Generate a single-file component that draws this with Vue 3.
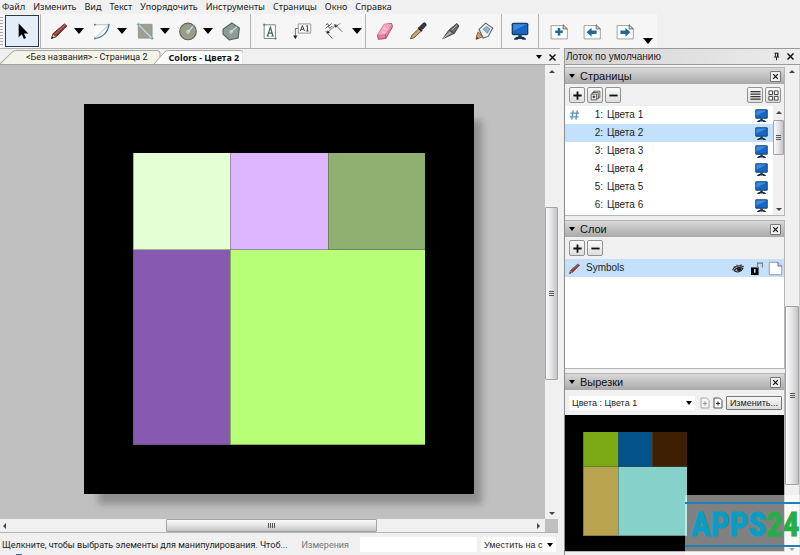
<script setup>
import { ref } from 'vue'

const menu = ['Файл', 'Изменить', 'Вид', 'Текст', 'Упорядочить', 'Инструменты', 'Страницы', 'Окно', 'Справка']

const monitor =
  '<rect x="2" y="2" width="20" height="15" rx="2" fill="#123d66"/><rect x="3.5" y="3.5" width="17" height="12" fill="#1768c4"/><path d="M4 4h16L4 12z" fill="#3c8be0"/><path d="M10 17h4v3h-4z" fill="#16324e"/><path d="M5 21l3-2h8l3 2v1.500h-4l-1-1h-4l-1 1H5z" fill="#16324e"/>'
const sheet =
  '<path d="M2.500 5.500h14.500l5 4v12h-19.500z" fill="#fdfdfd" stroke="#8d9296"/><path d="M17 4.500v5h5z" fill="#d8d8d8" stroke="#555"/>'

const icons = {
  cursor: '<path d="M8 3v16.500l3.800-3.500 2.500 5.500 2.400-1-2.300-5.500h5.200z" fill="#000"/>',
  pencil:
    '<path d="M3 21l2-6L18.500 3.500l3 2.500L9 18.500z" fill="#8e3a38" stroke="#542725"/><path d="M7 16L19.500 4.500" stroke="#c37670" stroke-width="1.200"/><path d="M3 21l1.700-5.300L8.500 19z" fill="#e0c49c" stroke="#5b4433" stroke-width=".8"/><path d="M3 21l.8-2.500 1.800 1.600z" fill="#111"/>',
  arc:
    '<path d="M4 4.500h16.500C19.500 13 13 20 4 21z" fill="#fff" opacity=".8"/><path d="M3 4.500h17.500L4 20.500" fill="none" stroke="#9bb3c1"/><path d="M20.500 3.500C19.500 13 13 20 3.500 21" fill="none" stroke="#3c7793" stroke-width="1.500"/><circle cx="3.500" cy="4.500" r="1.200" fill="#4489a8"/><circle cx="3.500" cy="21" r="1.200" fill="#4489a8"/>',
  rect:
    '<path d="M4 4h16.500v16.500H4z" fill="#9c9f91" stroke="#8c9089"/><path d="M4 4l16.500 17" stroke="#b9dcea" stroke-width="1.500"/><path d="M2 4h4M4 2v4M18.500 21h4M20.500 19v4" stroke="#6ea4bc"/>',
  circle:
    '<circle cx="12" cy="12.500" r="10" fill="#9b9d88" stroke="#57645f" stroke-width="1.300"/><path d="M12 13l6-6.500" stroke="#c5edf4" stroke-width="1.500"/><circle cx="12" cy="13" r="1.700" fill="none" stroke="#d3eef2"/><circle cx="18.500" cy="6" r="1.300" fill="#6ea4bc"/>',
  polygon:
    '<path d="M2.500 10l10.500-7.500 9 6-1.500 12-10.500 2-7.500-6.500z" fill="#929b93" stroke="#4d696f" stroke-width="1.500"/><path d="M12 13l7-6" stroke="#c5edf4" stroke-width="1.400"/><circle cx="12" cy="13" r="1.600" fill="none" stroke="#d3eef2"/>',
  text:
    '<path d="M5 4.500h13.500v16.500H5z" fill="#fbfdfc" stroke="#63766d"/><path d="M8 18h3M13.500 18h3M9 18l3.500-10.500L15.500 18M10 14.500h4.500" fill="none" stroke="#41645a" stroke-width="1.400"/><path d="M3.500 4.500h3M5 3v3M17 21h3M18.500 19.500v3" stroke="#63766d"/>',
  label:
    '<path d="M7.500 3.500h15v11h-15z" fill="#fafafa" stroke="#888"/><path d="M10 12l2.500-6.500L15 12M11 10h3M17 6.500l1.500-1V12M17 12h3" fill="none" stroke="#333" stroke-width="1.100"/><path d="M7 9H4v10" fill="none" stroke="#555"/><path d="M1.500 17.500h5L4 22z" fill="#222"/>',
  dimension:
    '<path d="M2 5l2-2 2 3 3-3M2 9l3-3 2 3 3-3M2 12l8 9" fill="none" stroke="#555" stroke-width="1.200"/><path d="M4 14L14 5l8 8" fill="none" stroke="#777" stroke-width="1.200"/><path d="M3 15l1.500-4 2.500 3zM12 4l5 1-3 3z" fill="#222"/><path d="M14 6l6-3" stroke="#888"/>',
  eraser:
    '<path d="M3 17L11 4l9-1 1 4-8 14-9 1z" fill="#e87f9c" stroke="#8a4357"/><path d="M3.500 16.500L11 4l9-.5-7.500 12z" fill="#f4a9bd"/><path d="M8 13l5 1M10 9l6 1" stroke="#fbd8e0"/><path d="M12.500 15.500L13 21" stroke="#a1536a"/>',
  dropper:
    '<path d="M3 21.500l1.500-4L13 9l3 3-8.500 8z" fill="#c6a06b" stroke="#5d4c39"/><path d="M11.500 8.500l2-1.500 4 4-1.500 2z" fill="#222"/><path d="M14 7l4.500-4.500c2-1 4 1 3 3L17.500 10z" fill="#343a42" stroke="#16191d"/>',
  knife:
    '<path d="M2 21.500L9.500 11l6 4z" fill="#85898c" stroke="#333"/><path d="M2 21.500l10-8.500" stroke="#ddd"/><path d="M10 10.500l9-7.500 2.500 3-5.500 9z" fill="#666b6f" stroke="#303336"/><path d="M13 11l6-6" stroke="#bbb"/>',
  glue:
    '<path d="M6 10l8-7.500 8.500 6-5.500 10-6 2z" fill="#eaf2f5" stroke="#58646a" stroke-width="1.300"/><path d="M11 10l4-3.500 4 3-3 5z" fill="#92b6cb" stroke="#60839a"/><path d="M5 13l5.500 6-4 1.500-4 1.500.5-4z" fill="#d49d62" stroke="#775334"/><path d="M2.500 22l1-3 2 2z" fill="#333"/>',
  monitor,
  add: sheet + '<path d="M10.500 8.500h3v3h3v3h-3v3h-3v-3h-3v-3h3z" fill="#20699c"/>',
  prev: sheet + '<path d="M5.500 13.500l6-5.500v3.500h6v4h-6v3.500z" fill="#20699c"/>',
  next: sheet + '<path d="M18.500 13.500L12.500 8v3.500h-6v4h6v3.500z" fill="#20699c"/>',
  plus: '<path d="M10 3h4v7h7v4h-7v7h-4v-7H3v-4h7z" fill="#111"/>',
  minus: '<path d="M3 10h18v4H3z" fill="#111"/>',
  duplicate:
    '<path d="M8 6V2.500h13.500V16H18" fill="none" stroke="#333" stroke-width="1.600"/><path d="M5 9V5.500h13V19h-3" fill="none" stroke="#333" stroke-width="1.600"/><path d="M2.500 9h12v12.500h-12z" fill="#eee" stroke="#333" stroke-width="1.600"/><path d="M8.500 12v6M5.500 15h6" stroke="#111" stroke-width="2"/>',
  list: '<path d="M1 3.500h22M1 9h22M1 14.500h22M1 20h22" stroke="#333" stroke-width="2.400"/>',
  grid: '<path d="M2 2h8v8H2zM14 2h8v8h-8zM2 14h8v8H2zM14 14h8v8h-8z" fill="#fff" stroke="#333" stroke-width="2"/>',
  close: '<path d="M4 4l16 16M20 4L4 20" stroke="#111" stroke-width="4"/>',
  pin: '<path d="M7 3h10M9 3v10M14.500 3v10M16 3v10M5 13.500h14M12 14v8" fill="none" stroke="#111" stroke-width="2.500"/>',
  hash: '<path d="M9 2L6 22M18 2l-3 20M3 8h19M2 16h19" stroke="#5f93b8" stroke-width="3"/>',
  eye: '<path d="M1 15C4 7 14 5 22 9M4 16c4-6 12-7 16-4-3 7-12 8-16 4z" fill="#b5b5b5" stroke="#222" stroke-width="2"/><circle cx="13" cy="13" r="4" fill="#222"/><path d="M4 8l2 3M9 5l1 3M17 4l-1 4" stroke="#222" stroke-width="1.500"/>',
  lock: '<path d="M0 10h14v14H0z" fill="#050505"/><path d="M12 11V2h9v8" fill="none" stroke="#777" stroke-width="2"/><path d="M7 13v7" stroke="#fff" stroke-width="2.400"/>',
  page: '<path d="M2 2h14l6 6v14H2z" fill="#fff" stroke="#99a" stroke-width="1.600"/><path d="M16 2v6h6" fill="#ddd" stroke="#667" stroke-width="1.600"/>',
  newpage:
    '<path d="M4 2h11l5 5v15H4z" fill="#fafafa" stroke="#555" stroke-width="2"/><path d="M12 9v8M8 13h8" stroke="#333" stroke-width="2.400"/>'
}

const groups = [
  [
    { icon: 'pencil', label: 'Линия', caret: true },
    { icon: 'arc', label: 'Дуга', caret: true },
    { icon: 'rect', label: 'Прямоугольник', caret: true },
    { icon: 'circle', label: 'Окружность', caret: true },
    { icon: 'polygon', label: 'Многоугольник' }
  ],
  [
    { icon: 'text', label: 'Текст' },
    { icon: 'label', label: 'Метка' },
    { icon: 'dimension', label: 'Размеры', caret: true }
  ],
  [
    { icon: 'eraser', label: 'Ластик' },
    { icon: 'dropper', label: 'Стиль' },
    { icon: 'knife', label: 'Разделить' },
    { icon: 'glue', label: 'Соединить' }
  ],
  [{ icon: 'monitor', label: 'Презентация' }],
  [
    { icon: 'add', label: 'Добавить страницу' },
    { icon: 'prev', label: 'Назад' },
    { icon: 'next', label: 'Вперёд' }
  ]
]

const pages = ['Цвета 1', 'Цвета 2', 'Цвета 3', 'Цвета 4', 'Цвета 5', 'Цвета 6']
const selected = ref(1)
</script>

<template>
  <div class="window">
    <nav class="menu">
      <a v-for="m in menu" :key="m" href="#">{{ m }}</a>
    </nav>

    <div class="toolbar">
      <div class="tools">
        <i class="grip"></i>
        <button class="tool picked" aria-label="Выбор"><svg viewBox="0 0 24 24" v-html="icons.cursor"></svg></button>
        <div v-for="(g, i) in groups" :key="i" class="group" :class="'group-' + i">
          <template v-for="t in g" :key="t.icon">
            <button class="tool" :aria-label="t.label"><svg viewBox="0 0 24 24" v-html="icons[t.icon]"></svg></button>
            <button v-if="t.caret" class="drop" :aria-label="t.label + ': варианты'"><i class="caret"></i></button>
          </template>
        </div>
        <button class="more" aria-label="Ещё"><i class="caret"></i></button>
      </div>
    </div>

    <div class="main">
      <section class="work">
        <div class="tabs">
          <button class="tab">
            <svg viewBox="0 0 158 14" preserveAspectRatio="none"><path d="M0 14L11 3Q13 .5 16 .5H154Q157.500 .5 157.500 4V14" /></svg>
            <span>&lt;Без названия&gt; - Страница 2</span>
          </button>
          <button class="tab active">
            <svg viewBox="0 0 92 14" preserveAspectRatio="none"><path d="M0 14L10 3Q12 .5 15 .5H89Q91.500 .5 91.500 3V14" /></svg>
            <span>Colors - Цвета 2</span>
          </button>
          <div class="tab-actions">
            <button class="bare" aria-label="Список вкладок"><i class="caret small"></i></button>
            <button class="bare" aria-label="Закрыть"><svg class="s9" viewBox="0 0 24 24" v-html="icons.close"></svg></button>
          </div>
        </div>

        <div class="view">
          <div class="canvas">
            <div class="paper">
              <div class="swatches">
                <i class="mint"></i><i class="lilac"></i><i class="olive"></i><i class="violet"></i><i class="lime"></i>
              </div>
            </div>
          </div>
          <div class="scroll vertical">
            <i class="arrow up"></i>
            <div class="track"><i class="thumb"><b></b></i></div>
            <i class="arrow down"></i>
          </div>
        </div>
        <div class="bottom-scroll">
          <div class="scroll horizontal">
            <i class="arrow left"></i>
            <div class="track"><i class="thumb"><b></b></i></div>
            <i class="arrow right"></i>
          </div>
          <i class="corner"></i>
        </div>

        <footer class="status">
          <span class="hint">Щелкните, чтобы выбрать элементы для манипулирования. Чтоб...</span>
          <label for="measure">Измерения</label>
          <input id="measure" type="text" />
          <div class="select zoom">
            <select aria-label="Масштаб"><option>Уместить на с</option></select>
            <i class="caret small"></i>
          </div>
        </footer>
        <div class="info"><i></i></div>
      </section>

      <aside class="tray">
        <header class="tray-title">
          <h2>Лоток по умолчанию</h2>
          <button class="bare" aria-label="Закрепить"><svg class="s9" viewBox="0 0 24 24" v-html="icons.pin"></svg></button>
          <button class="bare" aria-label="Закрыть лоток"><svg class="s9" viewBox="0 0 24 24" v-html="icons.close"></svg></button>
        </header>
        <div class="tray-body">
          <div class="panels">
            <section class="panel">
              <header class="panel-title">
                <i class="caret small"></i>
                <h3>Страницы</h3>
                <button class="x" aria-label="Закрыть"><svg viewBox="0 0 24 24" v-html="icons.close"></svg></button>
              </header>
              <div class="panel-tools">
                <button class="sq" aria-label="Добавить"><svg viewBox="0 0 24 24" v-html="icons.plus"></svg></button>
                <button class="sq" aria-label="Дублировать"><svg viewBox="0 0 24 24" v-html="icons.duplicate"></svg></button>
                <button class="sq" aria-label="Удалить"><svg viewBox="0 0 24 24" v-html="icons.minus"></svg></button>
                <i class="fill"></i>
                <button class="sq" aria-label="Список"><svg viewBox="0 0 24 24" v-html="icons.list"></svg></button>
                <button class="sq" aria-label="Сетка"><svg viewBox="0 0 24 24" v-html="icons.grid"></svg></button>
              </div>
              <div class="list">
                <ul>
                  <li v-for="(p, i) in pages" :key="p" :class="{ on: selected === i }" @click="selected = i">
                    <span class="mark"><svg v-if="i === 0" viewBox="0 0 24 24" v-html="icons.hash"></svg></span>
                    <span class="num">{{ i + 1 }}:</span>
                    <span class="name">{{ p }}</span>
                    <svg class="screen" viewBox="0 0 24 24" v-html="icons.monitor"></svg>
                  </li>
                </ul>
                <div class="scroll vertical narrow">
                  <i class="arrow up"></i>
                  <div class="track start"><i class="thumb"><b></b></i></div>
                  <i class="arrow down"></i>
                </div>
              </div>
            </section>

            <section class="panel">
              <header class="panel-title">
                <i class="caret small"></i>
                <h3>Слои</h3>
                <button class="x" aria-label="Закрыть"><svg viewBox="0 0 24 24" v-html="icons.close"></svg></button>
              </header>
              <div class="panel-tools">
                <button class="sq" aria-label="Добавить слой"><svg viewBox="0 0 24 24" v-html="icons.plus"></svg></button>
                <button class="sq" aria-label="Удалить слой"><svg viewBox="0 0 24 24" v-html="icons.minus"></svg></button>
              </div>
              <div class="list">
                <ul>
                  <li class="on layer">
                    <svg viewBox="0 0 24 24" v-html="icons.pencil"></svg>
                    <span class="name">Symbols</span>
                    <svg viewBox="0 0 24 24" v-html="icons.eye"></svg>
                    <svg viewBox="0 0 24 24" v-html="icons.lock"></svg>
                    <svg class="big" viewBox="0 0 24 24" v-html="icons.page"></svg>
                  </li>
                </ul>
              </div>
            </section>

            <section class="panel">
              <header class="panel-title">
                <i class="caret small"></i>
                <h3>Вырезки</h3>
                <button class="x" aria-label="Закрыть"><svg viewBox="0 0 24 24" v-html="icons.close"></svg></button>
              </header>
              <div class="panel-tools scrap">
                <div class="select">
                  <select aria-label="Вырезки"><option>Цвета : Цвета 1</option></select>
                  <i class="caret small"></i>
                </div>
                <button class="bare dim" aria-label="Добавить вырезку"><svg class="s12" viewBox="0 0 24 24" v-html="icons.newpage"></svg></button>
                <button class="bare" aria-label="Новая вырезка"><svg class="s12" viewBox="0 0 24 24" v-html="icons.newpage"></svg></button>
                <button class="edit">Изменить...</button>
              </div>
              <div class="preview">
                <div class="swatches mini">
                  <i class="green"></i><i class="blue"></i><i class="brown"></i><i class="sand"></i><i class="aqua"></i>
                </div>
              </div>
            </section>
          </div>
          <div class="scroll vertical tray-scroll">
            <i class="arrow up"></i>
            <div class="track low"><i class="thumb"><b></b></i></div>
            <i class="arrow down"></i>
          </div>
        </div>
      </aside>
    </div>

    <div class="brand"><span>APPS<em>24</em></span></div>
  </div>
</template>

<style>
body { margin: 0; overflow: hidden; }
</style>

<style scoped>
* { box-sizing: border-box; }
.window {
  position: relative;
  height: 100vh;
  display: flex;
  flex-direction: column;
  overflow: hidden;
  background: #f0f0f0;
  color: #222;
  font: 10px/12px "Liberation Sans", sans-serif;
}
button, select, input { margin: 0; padding: 0; border: 0; background: none; color: inherit; font: inherit; }
button { display: flex; align-items: center; justify-content: center; flex: none; }
svg { display: block; flex: none; }
h2, h3, ul { margin: 0; padding: 0; font-weight: normal; list-style: none; }

.menu { display: flex; gap: 8px; height: 14px; padding-left: 2px; font: 9px/13px "Noto Sans", sans-serif; }
.menu a { color: #222; text-decoration: none; white-space: nowrap; }

.toolbar { display: flex; height: 34px; }
.tools { display: flex; align-items: stretch; background: #f6f6f6; padding-right: 2px; }
.grip { width: 3px; margin: 3px 2px 3px 0; background: repeating-linear-gradient(#aaa 0 1px, #f6f6f6 1px 3px); }
.tool { width: 33px; }
.tool svg { width: 20px; height: 20px; }
.tool.picked { width: 34px; margin: 1px 1px 1px 0; border: 1px solid #2b3a46; background: #e3eef8; }
.group { display: flex; border-left: 1px solid #b4b4b4; }
.group-0 { padding: 0 6px 0 5px; }
.group-0 .tool { width: 26px; }
.group-0 .drop { margin-right: 3px; }
.group-1 { padding: 0 1px 0 3px; }
.group-1 .tool { width: 32px; }
.group-2 { padding: 0 1px 0 2px; }
.group-3 { padding: 0 2px 0 1px; }
.group-4 { padding-left: 3px; }
.drop { width: 14px; }
.caret { display: block; flex: none; border: 5px solid transparent; border-top: 6px solid #000; border-bottom: 0; }
.caret.small { border-width: 4px 3px 0; }
.more { width: 14px; align-items: flex-end; padding-bottom: 4px; }

.main { flex: 1; min-height: 0; display: flex; }
.work { flex: 1; min-width: 0; display: flex; flex-direction: column; border-top: 1px solid #b0b0b0; }
.tabs { display: flex; align-items: flex-end; height: 16px; padding-right: 3px; border-bottom: 1px solid #98a4ae; font: 9px/13px "Noto Sans", sans-serif; }
.tab { position: relative; height: 14px; padding: 0 13px 0 26px; white-space: nowrap; font-family: Roboto, sans-serif; }
.tab svg { position: absolute; left: 0; top: 0; width: 100%; height: 100%; fill: #f3f3e8; stroke: #a7a79f; }
.tab span { position: relative; }
.tab.active { margin-left: -7px; padding: 0 4px 0 15px; font-family: "Noto Sans", sans-serif; font-weight: bold; color: #111; }
.tab.active svg { fill: #fff; }
.tab-actions { display: flex; margin-left: auto; gap: 6px; align-items: center; height: 14px; }
.s9 { width: 9px; height: 9px; }
.s12 { width: 12px; height: 12px; }

.view { flex: 1; min-height: 0; display: flex; }
.canvas { flex: 1; min-width: 0; overflow: hidden; padding: 39px 0 0 84px; background: #c0c0c0; }
.paper { width: 390px; padding: 49px; background: #000; box-shadow: 11px 13px 7px -3px #909090; }
.swatches { display: grid; grid-template-columns: 1fr 1fr 1fr; grid-template-rows: 1fr 1fr 1fr; aspect-ratio: 1; }
.swatches i { border: solid rgba(70, 80, 60, .45); border-width: 0 0 1px 1px; }
.swatches i:nth-child(4) { grid-row: 2 / 4; }
.swatches i:nth-child(5) { grid-area: 2 / 2 / 4 / 4; }
.mint { background: #e5ffd4; }
.lilac { background: #dcb6ff; }
.olive { background: #8fb070; }
.violet { background: #8759b0; }
.lime { background: #b7ff76; }

.scroll { display: flex; flex: none; align-items: center; background: #f0f0f0; }
.vertical { flex-direction: column; width: 13px; }
.horizontal { flex: 1; height: 13px; }
.arrow { flex: none; border: 3px solid transparent; }
.up { margin: 2px 0 6px; border-bottom-color: #444; }
.down { margin: 4px 0; border-top-color: #444; border-bottom: 0; }
.left { margin: 0 4px 0 0; border-right-color: #444; }
.right { margin: 0 2px 0 4px; border-left-color: #444; }
.track { flex: 1; display: flex; min-height: 0; }
.vertical .track { flex-direction: column; width: 100%; }
.horizontal .track { height: 100%; }
.track::before, .track::after { content: ""; flex: 3 0 0; }
.thumb { display: flex; align-items: center; justify-content: center; flex: 4 0 0; border: 1px solid #a3a3a3; border-radius: 1px; background: linear-gradient(90deg, #fafafa, #e4e4e6 50%, #c4c4c8); }
.horizontal .thumb { background: linear-gradient(#fafafa, #e4e4e6 50%, #c4c4c8); }
.thumb b { width: 5px; height: 5px; background: repeating-linear-gradient(#555 0 1px, transparent 1px 2px); }
.horizontal .thumb b { width: 7px; height: 5px; background: repeating-linear-gradient(90deg, #555 0 1px, transparent 1px 2px); }
.narrow { width: 11px; }
.track.start::before { flex: 0 0 0; }
.start .thumb { flex-grow: 2; }
.low::before { flex-grow: 23; }
.low::after { flex-grow: 6; }
.low .thumb { flex-grow: 18; }
.bottom-scroll { display: flex; border-bottom: 1px solid #b4b4b4; }
.corner { width: 13px; background: #c0c0c0; }
.view, .bottom-scroll { margin-right: 2px; }

.status { display: flex; align-items: center; height: 21px; padding: 2px 4px 0 2px; font-size: 9px; color: #222; }
.hint { flex: 1; white-space: nowrap; overflow: hidden; font-family: Roboto, sans-serif; }
.status label { margin-right: 11px; color: #777; font-family: Roboto, sans-serif; }
.status input { width: 117px; height: 15px; background: #fff; }
.select { display: flex; align-items: center; position: relative; background: #fff; height: 14px; }
.select select { flex: 1; min-width: 0; width: 100%; height: 100%; appearance: none; }
.select .caret { position: absolute; right: 3px; pointer-events: none; }
.zoom { width: 75px; height: 15px; margin-left: 4px; }
.zoom select { padding-left: 3px; }
.info { height: 1px; padding-left: 16px; }
.info i { display: block; width: 6px; height: 1px; background: #3a6fa5; }

.tray { width: 240px; flex: none; display: flex; flex-direction: column; padding-left: 4px; }
.tray-title { display: flex; align-items: center; gap: 5px; height: 17px; padding: 0 5px 0 1px; border: 1px solid #999; border-width: 1px 0 1px 1px; background: linear-gradient(90deg, #d2d2d2, #ececec); }
.tray-title h2 { flex: 1; font-size: 10px; }
.tray-body { flex: 1; min-height: 0; display: flex; border-left: 1px solid #8b8b8b; }
.panels { flex: 1; min-width: 0; display: flex; flex-direction: column; gap: 4px; padding-top: 2px; }
.panel { border: 1px solid #b5b5b5; border-left: 0; }
.panel-title { display: flex; align-items: center; gap: 5px; height: 16px; padding: 0 3px 0 4px; background: linear-gradient(#d9d9d9, #a9a9a9); color: #111; }
.panel-title h3 { flex: 1; font-size: 11px; }
.x { width: 11px; height: 11px; border: 1px solid #777; border-radius: 1px; background: #eee; }
.x svg { width: 7px; height: 7px; }
.panel-tools { display: flex; align-items: center; gap: 2px; height: 22px; padding: 0 3px 0 4px; }
.sq { width: 16px; height: 16px; border: 1px solid #929292; border-radius: 2px; background: linear-gradient(#fafafa, #dedede); }
.sq svg { width: 11px; height: 11px; }
.fill { flex: 1; }
.list { display: flex; height: 109px; background: #fff; overflow: hidden; }
.list ul { flex: 1; }
.list li { display: flex; align-items: center; height: 18px; padding: 0 4px; }
.list li.on { background: #c3e0fd; }
.mark { width: 20px; }
.mark svg { width: 11px; height: 12px; }
.num { width: 14px; text-align: right; }
.name { flex: 1; margin-left: 4px; }
.screen { width: 15px; height: 15px; }
.list .layer { height: 18px; gap: 6px; padding: 0 1px 0 3px; }
.layer svg { width: 13px; height: 13px; }
.layer .name { margin: 0 0 0 -1px; }
.layer .big { width: 15px; height: 15px; margin-left: -2px; }
.scrap { height: 25px; gap: 1px; font-size: 9px; padding: 0 2px 0 4px; }
.scrap .select { flex: 1; margin-right: 3px; }
.scrap select { padding-left: 3px; }
.dim { opacity: .45; }
.edit { height: 14px; padding: 0 3px; margin-left: 1px; border: 1px solid #777; border-radius: 1px; background: linear-gradient(#f6f6f6, #dcdcdc); }
.preview { height: 136px; padding: 17px 0 0 18px; background: #000; }
.mini { width: 104px; }
.green { background: #7caa17; }
.blue { background: #04528a; }
.brown { background: #3e1f03; }
.sand { background: #b9a34e; }
.aqua { background: #86d1c9; }
.tray-scroll { width: 15px; border-right: 1px solid #ccc; }

.brand {
  position: absolute;
  right: 0;
  bottom: 0;
  width: 115px;
  height: 60px;
  padding-top: 7px;
  background: rgba(255, 255, 255, .5);
}
.brand span {
  display: block;
  height: 45px;
  padding-left: 6px;
  border: solid #1f7fbd;
  border-width: 2px 0;
  color: #0b9cc4;
  font: bold 33px/42px "Liberation Sans Narrow", "Roboto Condensed", "DejaVu Sans Condensed", sans-serif;
  -webkit-text-stroke: 1px currentColor;
}
.brand em { font-style: normal; color: #27ad48; }
</style>
